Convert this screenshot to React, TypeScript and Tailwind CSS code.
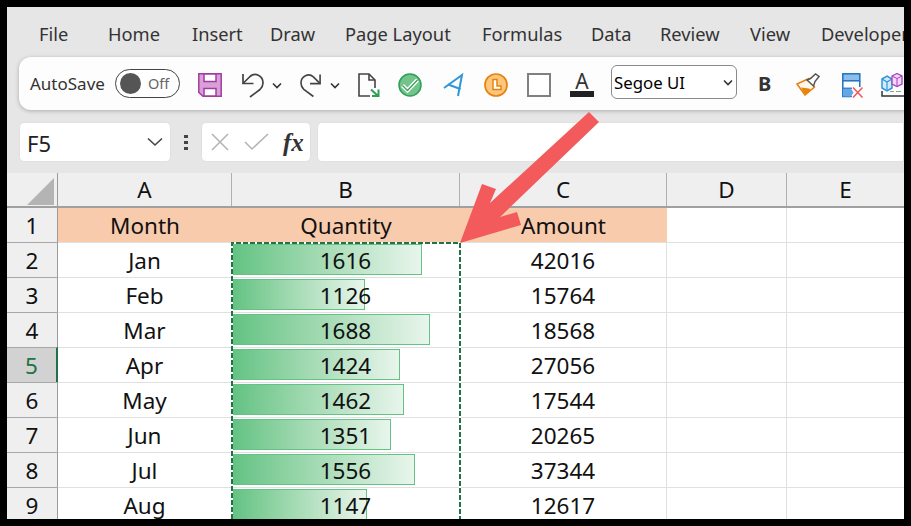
import React from "react";

const tabs: [string, string][] = [
  ["File", "w-[94px] pl-[32px]"],
  ["Home", "w-[84px] pl-[7px]"],
  ["Insert", "w-[78px] pl-[7px]"],
  ["Draw", "w-[75px] pl-[7px]"],
  ["Page Layout", "w-[137px] pl-[7px]"],
  ["Formulas", "w-[109px] pl-[7px]"],
  ["Data", "w-[69px] pl-[7px]"],
  ["Review", "w-[90px] pl-[7px]"],
  ["View", "w-[71px] pl-[7px]"],
  ["Developer", "w-[104px] pl-[7px]"],
];

const rows = [
  ["2", "Jan", "1616", "42016", 189],
  ["3", "Feb", "1126", "15764", 132],
  ["4", "Mar", "1688", "18568", 197],
  ["5", "Apr", "1424", "27056", 167],
  ["6", "May", "1462", "17544", 171],
  ["7", "Jun", "1351", "20265", 158],
  ["8", "Jul", "1556", "37344", 182],
  ["9", "Aug", "1147", "12617", 134],
] as const;

function Save() {
  return (
    <svg width="24" height="24" viewBox="0 0 24 24" className="block">
      <path d="M.8.8h22.400v22.400H5L.8 19.500z" fill="#d99fd9" stroke="#a23ca2" strokeWidth="1.500" />
      <rect x="6" y="1" width="12" height="7.500" fill="#fff" stroke="#a23ca2" strokeWidth="1.500" />
      <rect x="6" y="15.500" width="12" height="7.500" fill="#fff" stroke="#a23ca2" strokeWidth="1.500" />
    </svg>
  );
}
function Chevron() {
  return (
    <svg width="10" height="7" viewBox="0 0 10 7" fill="none" stroke="#333" strokeWidth="1.600" className="block">
      <path d="M1 1.500l4 4 4-4" />
    </svg>
  );
}
function Undo() {
  return (
    <svg width="23" height="26" viewBox="0 0 23 26" fill="none" stroke="#444" strokeWidth="1.700" className="block">
      <path d="M2 2v9.500h10.500" />
      <path d="M2 11.500L9 4.500C14 0 22 3.500 22 11c0 3-1.500 5-3 6.500L9 25" />
    </svg>
  );
}
function Redo() {
  return (
    <svg width="22" height="26" viewBox="0 0 23 26" fill="none" stroke="#444" strokeWidth="1.700" className="block -scale-x-100">
      <path d="M2 2v9.500h10.500" />
      <path d="M2 11.500L9 4.500C14 0 22 3.500 22 11c0 3-1.500 5-3 6.500L9 25" />
    </svg>
  );
}
function NewDoc() {
  return (
    <svg width="22" height="24" viewBox="0 0 22 24" fill="none" className="block">
      <path d="M12 23H1V1h10l6 6v8" stroke="#444" strokeWidth="1.600" />
      <path d="M11 1v6h6" stroke="#444" strokeWidth="1.600" />
      <path d="M13 16.500l6.500 6M20.500 16.500V23H14" stroke="#2e9e55" strokeWidth="2" />
    </svg>
  );
}
function Check() {
  return (
    <svg width="24" height="24" viewBox="0 0 24 24" className="block">
      <circle cx="12" cy="12" r="11" fill="#72c48b" stroke="#2f9e57" strokeWidth="1.500" />
      <path d="M4.500 12.500l5 5L19.500 7" fill="none" stroke="#fff" strokeWidth="4" />
      <path d="M4.500 12.500l5 5L19.500 7" fill="none" stroke="#3d9e5e" strokeWidth="1.300" />
    </svg>
  );
}
function BlueA() {
  return (
    <svg width="21" height="26" viewBox="0 0 21 26" fill="none" stroke="#2f95dc" strokeWidth="2" className="block">
      <path d="M1 16L19 3l-4 21" />
      <path d="M5 12.500L17.500 17" />
    </svg>
  );
}
function Clock() {
  return (
    <svg width="24" height="24" viewBox="0 0 24 24" className="block">
      <circle cx="12" cy="12" r="11" fill="#fbc77d" stroke="#e8820e" strokeWidth="1.700" />
      <path d="M9 6.500v10h8v-3.500h-4V6.500z" fill="#fff" stroke="#e8820e" strokeWidth="1.500" />
    </svg>
  );
}
function Brush() {
  return (
    <svg width="24" height="23" viewBox="0 0 24 23" fill="none" className="block">
      <path d="M1 11L13 5.500 18.500 14 9 22z" fill="#fff7ea" stroke="#e8820e" strokeWidth="1.500" />
      <path d="M5 14.500L9 22l6-5-2-1.500z" fill="#e8820e" />
      <path d="M11 7l3.500-1.500L19.500 1 23 3.500l-4 5-1.500 4.500z" fill="#fff" stroke="#555" strokeWidth="1.500" />
    </svg>
  );
}
function ClearRows() {
  return (
    <svg width="21" height="25" viewBox="0 0 21 25" fill="none" className="block">
      <rect x=".8" y=".8" width="17" height="7" fill="#8cbdec" stroke="#1f73c0" strokeWidth="1.500" />
      <path d="M.8 8v15.500h9" stroke="#1f73c0" strokeWidth="1.500" />
      <path d="M1 15.500h8l2.500 4-2.500 4H1z" fill="#63a7e6" />
      <path d="M1 15.200h9" stroke="#1f73c0" strokeWidth="1.200" />
      <path d="M17.800 8v6" stroke="#1f73c0" strokeWidth="1.500" />
      <path d="M11 14.500l9.500 10M20.500 14.500L11 24.500" stroke="#f0545a" strokeWidth="1.500" />
    </svg>
  );
}
function Cubes() {
  return (
    <svg width="23" height="24" viewBox="0 0 23 24" fill="none" className="block">
      <path d="M1 6l5-3 5 3v9l-5 3-5-3z" fill="#d5ebfb" stroke="#2f95dc" strokeWidth="1.500" />
      <path d="M1 6l5 3 5-3M6 9v9" stroke="#2f95dc" strokeWidth="1.200" />
      <path d="M11 3l5-2.500L21 3v8l-5 2.500L11 11z" fill="#f0d9f5" stroke="#a93fc4" strokeWidth="1.300" />
      <path d="M11 3l5 2.500L21 3M16 5.500v8" stroke="#a93fc4" strokeWidth="1" />
      <path d="M1 18v5h22" stroke="#333" strokeWidth="1.500" />
      <path d="M9 18.500h4M15 18.500h5" stroke="#999" strokeWidth="1" />
    </svg>
  );
}

export default function App() {
  return (
    <div className="relative w-[911px] h-[526px] bg-black overflow-hidden font-['Noto_Sans',sans-serif]">
      <div className="absolute left-[7px] top-[7px] w-[897px] h-[512px] bg-[#e6e6e6] overflow-hidden flex flex-col">
        {/* Tabs */}
        <div className="h-[50px] flex items-center shrink-0 text-[18.300px] text-[#333] whitespace-nowrap">
          {tabs.map(([t, c]) => (
            <div key={t} className={`${c} shrink-0 mt-[4px]`}>{t}</div>
          ))}
        </div>

        {/* Quick access toolbar */}
        <div className="h-[53px] ml-[12px] w-[900px] shrink-0 bg-[#fdfdfd] rounded-l-[12px] shadow-[0_1px_4px_rgba(0,0,0,0.25)] flex items-center pl-[11px]">
          <span className="text-[17px] text-[#333] w-[85px] shrink-0">AutoSave</span>
          <div className="w-[65px] h-[29px] rounded-full border border-[#444] bg-white flex items-center pl-[4px] gap-[7px] shrink-0">
            <span className="w-[21px] h-[21px] rounded-full bg-[#555] block" />
            <span className="text-[14.500px] text-[#666]">Off</span>
          </div>
          <div className="ml-[18px] mt-[3px] shrink-0"><Save /></div>
          <div className="ml-[19px] mt-[3px] shrink-0"><Undo /></div>
          <div className="ml-[8px] mt-[3px] shrink-0"><Chevron /></div>
          <div className="ml-[18px] mt-[3px] shrink-0"><Redo /></div>
          <div className="ml-[8px] mt-[3px] shrink-0"><Chevron /></div>
          <div className="ml-[18px] mt-[3px] shrink-0"><NewDoc /></div>
          <div className="ml-[18px] mt-[3px] shrink-0"><Check /></div>
          <div className="ml-[21px] mt-[3px] shrink-0"><BlueA /></div>
          <div className="ml-[20px] mt-[3px] shrink-0"><Clock /></div>
          <div className="ml-[19px] mt-[3px] w-[24px] h-[24px] border-2 border-[#808080] bg-white shrink-0" />
          <div className="ml-[19px] mt-[3px] w-[24px] h-[24px] flex flex-col items-center justify-between shrink-0">
            <span className="text-[21px] leading-[17px] text-[#333]">A</span>
            <span className="w-[24px] h-[6px] bg-[#222] block" />
          </div>
          <div className="ml-[17px] -mt-[3px] w-[126px] h-[34px] rounded-[6px] border border-[#8a8a8a] bg-white flex items-center justify-between pl-[2px] pr-[3px] shrink-0">
            <span className="text-[16.800px] text-black mt-[1px]">Segoe UI</span>
            <Chevron />
          </div>
          <span className="ml-[21px] w-[14px] text-[20px] font-bold text-[#333] shrink-0">B</span>
          <div className="ml-[24px] mt-[1px] shrink-0"><Brush /></div>
          <div className="ml-[22px] mt-[3px] shrink-0"><ClearRows /></div>
          <div className="ml-[18px] mt-[3px] shrink-0"><Cubes /></div>
        </div>

        {/* Formula bar */}
        <div className="mt-[12px] h-[40px] ml-[12px] flex items-center shrink-0">
          <div className="w-[152px] h-full rounded-[5px] bg-white border border-[#e0e0e0] flex items-center justify-between pl-[7px] pr-[7px]">
            <span className="text-[22px] text-[#222] mt-[2px]">F5</span>
            <svg width="16" height="10" viewBox="0 0 16 10" fill="none" stroke="#444" strokeWidth="1.600"><path d="M1 1.500l7 6.500 7-6.500" /></svg>
          </div>
          <div className="w-[30px] flex flex-col items-center gap-[3px] shrink-0">
            <span className="w-[4px] h-[3px] bg-[#444] block" />
            <span className="w-[4px] h-[3px] bg-[#444] block" />
            <span className="w-[4px] h-[3px] bg-[#444] block" />
          </div>
          <div className="w-[110px] h-full rounded-[5px] bg-white border border-[#e0e0e0] flex items-center pl-[8px] shrink-0">
            <svg width="20" height="20" viewBox="0 0 20 20" fill="none" stroke="#b5b5b5" strokeWidth="1.600"><path d="M2 2l16 16M18 2L2 18" /></svg>
            <svg className="ml-[14px]" width="26" height="18" viewBox="0 0 26 18" fill="none" stroke="#b5b5b5" strokeWidth="1.600"><path d="M1 9l7 7L24 1" /></svg>
            <span className="ml-[13px] text-[25px] italic font-bold leading-none text-[#333] font-['Liberation_Serif',serif]">fx</span>
          </div>
          <div className="ml-[6px] flex-1 h-full rounded-l-[5px] bg-white border border-[#e0e0e0]" />
        </div>

        {/* Sheet */}
        <div className="mt-[11px] flex-1 bg-white flex flex-col text-[22.500px] text-[#111]">
          <div className="h-[35px] flex bg-[#efefef] border-b-2 border-[#a0a0a0] shrink-0">
            <div className="w-[51px] shrink-0 border-r border-[#9a9a9a] relative">
              <svg className="absolute right-[3px] bottom-[1px]" width="27" height="27" viewBox="0 0 27 27"><path d="M27 0v27H0z" fill="#b4b4b4" /></svg>
            </div>
            <div className="w-[174px] shrink-0 border-r border-[#b0b0b0] text-center leading-[34px]">A</div>
            <div className="w-[228px] shrink-0 border-r border-[#b0b0b0] text-center leading-[34px]">B</div>
            <div className="w-[207px] shrink-0 border-r border-[#b0b0b0] text-center leading-[34px]">C</div>
            <div className="w-[120px] shrink-0 border-r border-[#b0b0b0] text-center leading-[34px]">D</div>
            <div className="w-[117px] shrink-0 text-center leading-[34px]">E</div>
          </div>

          <div className="h-[35px] flex shrink-0 border-b border-[#e0e0e0]">
            <div className="w-[51px] shrink-0 bg-[#efefef] border-r border-[#9a9a9a] text-center leading-[36px]">1</div>
            <div className="w-[609px] shrink-0 bg-[#f8cbad] flex leading-[36px]">
              <div className="w-[174px] text-center">Month</div>
              <div className="w-[228px] text-center">Quantity</div>
              <div className="w-[207px] text-center">Amount</div>
            </div>
            <div className="w-[120px] shrink-0 border-r border-[#e0e0e0]" />
          </div>

          {rows.map(([n, m, q, a, w]) => {
            const sel = n === "5";
            return (
              <div key={n} className="h-[35px] flex shrink-0 border-b border-[#e0e0e0]">
                <div className={`w-[51px] shrink-0 text-center leading-[36px] border-t border-[#a8a8a8] -mt-[1px] h-[36px] ${sel ? "bg-[#d2d2d2] text-[#217346] border-r-2 border-r-[#217346]" : "bg-[#efefef] border-r border-r-[#9a9a9a]"}`}>{n}</div>
                <div className="w-[174px] shrink-0 text-center leading-[36px] border-r border-[#e0e0e0]">{m}</div>
                <div className="w-[228px] shrink-0 relative border-r border-[#e0e0e0] pl-[1px] pt-[1px]">
                  <div
                    className="h-[31px] border border-[#63c384] bg-gradient-to-r from-[#63c384] to-[#e8f5ec]"
                    style={{ width: w }}
                  />
                  <div className="absolute inset-0 text-center leading-[36px]">{q}</div>
                </div>
                <div className="w-[207px] shrink-0 text-center leading-[36px] border-r border-[#e0e0e0]">{a}</div>
                <div className="w-[120px] shrink-0 border-r border-[#e0e0e0]" />
              </div>
            );
          })}
        </div>
      </div>

      {/* Copy marquee and arrow, drawn over the sheet */}
      <svg className="absolute left-0 top-0 pointer-events-none" width="911" height="526" viewBox="0 0 911 526">
        <path d="M232 519V243H460V519" fill="none" stroke="#fff" strokeWidth="2" />
        <path d="M232 519V243H460V519" fill="none" stroke="#217346" strokeWidth="2" strokeDasharray="5 2" />
        <path d="M460 243L482 184 496 189 490 203 589 112 599 122 500 217 517 212 521 225z" fill="#f25a5c" />
      </svg>
    </div>
  );
}
